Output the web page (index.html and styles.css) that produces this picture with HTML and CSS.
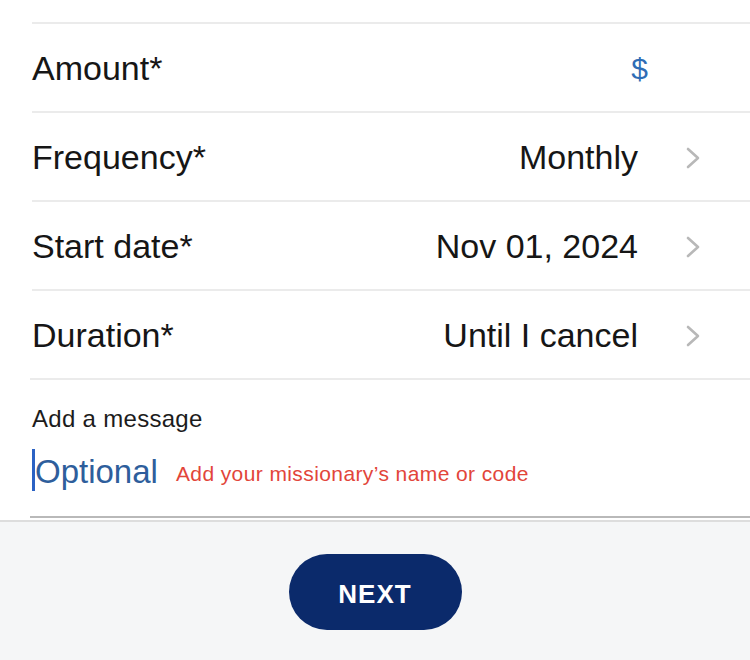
FILE: index.html
```html
<!DOCTYPE html>
<html>
<head>
<meta charset="utf-8">
<link rel="stylesheet" href="styles.css">
</head>
<body>
<div class="page">
  <div class="list">
    <div class="row">
      <span class="label">Amount*</span>
      <span class="dollar">$</span>
    </div>
    <div class="row">
      <span class="label">Frequency*</span>
      <span class="value-wrap"><span class="value">Monthly</span><svg class="chev" width="17" height="24" viewBox="0 0 17 24"><path d="M3 3 L13 12 L3 21" fill="none" stroke="#b8b8b8" stroke-width="2.6" stroke-linecap="round" stroke-linejoin="round"/></svg></span>
    </div>
    <div class="row">
      <span class="label">Start date*</span>
      <span class="value-wrap"><span class="value">Nov 01, 2024</span><svg class="chev" width="17" height="24" viewBox="0 0 17 24"><path d="M3 3 L13 12 L3 21" fill="none" stroke="#b8b8b8" stroke-width="2.6" stroke-linecap="round" stroke-linejoin="round"/></svg></span>
    </div>
    <div class="row">
      <span class="label">Duration*</span>
      <span class="value-wrap"><span class="value">Until I cancel</span><svg class="chev" width="17" height="24" viewBox="0 0 17 24"><path d="M3 3 L13 12 L3 21" fill="none" stroke="#b8b8b8" stroke-width="2.6" stroke-linecap="round" stroke-linejoin="round"/></svg></span>
    </div>
    <div class="message">
      <div class="msg-label">Add a message</div>
      <div class="msg-input">
        <span class="caret"></span>
        <span class="placeholder">Optional</span>
        <span class="note">Add your missionary’s name or code</span>
      </div>
    </div>
  </div>
  <div class="footer">
    <button class="next">NEXT</button>
  </div>
</div>
</body>
</html>
```
FILE: styles.css
```css
html, body {
  margin: 0;
  padding: 0;
  background: #ffffff;
  font-family: "Liberation Sans", Arial, sans-serif;
  color: #161616;
}

.page {
  width: 750px;
  height: 660px;
  display: flex;
  flex-direction: column;
  overflow: hidden;
}

.list {
  padding-top: 22px;
  padding-left: 32px;
}

.row {
  height: 89px;
  box-sizing: border-box;
  border-top: 2px solid #ebebeb;
  display: flex;
  align-items: center;
  justify-content: space-between;
  padding-right: 48px;
  padding-top: 2px;
}

.label {
  font-size: 34px;
}

.dollar {
  font-size: 30px;
  color: #2f6db5;
  margin-right: 54px;
}

.value-wrap {
  display: flex;
  align-items: center;
}

.value {
  font-size: 34px;
}

.chev {
  margin-left: 47px;
  display: block;
}

.message {
  border-top: 2px solid #ebebeb;
  height: 140px;
  box-sizing: border-box;
  padding-top: 25px;
  border-bottom: 2px solid #b9b9b9;
  margin-left: -2px;
  padding-left: 2px;
}

.msg-label {
  font-size: 24px;
  letter-spacing: 0.3px;
  line-height: 28px;
  color: #1c1c1c;
}

.msg-input {
  display: flex;
  align-items: center;
  margin-top: 16px;
  height: 42px;
}

.caret {
  width: 3px;
  height: 42px;
  background: #2b62c4;
  flex: none;
}

.placeholder {
  font-size: 33px;
  color: #2e5e9c;
  margin-top: 4px;
}

.note {
  font-size: 21px;
  letter-spacing: 0.4px;
  color: #e2453a;
  margin-left: 18px;
  margin-top: 8px;
}

.footer {
  flex: 1;
  margin-top: 2px;
  border-top: 2px solid #dddddd;
  background: #f5f6f7;
  display: flex;
  justify-content: center;
  align-items: flex-start;
  padding-top: 32px;
}

.next {
  width: 173px;
  height: 76px;
  border: none;
  border-radius: 38px;
  background: #0b2a6b;
  color: #ffffff;
  font-family: "Liberation Sans", Arial, sans-serif;
  font-weight: bold;
  font-size: 26px;
  letter-spacing: 1px;
  padding: 4px 0 0 0;
}
```
